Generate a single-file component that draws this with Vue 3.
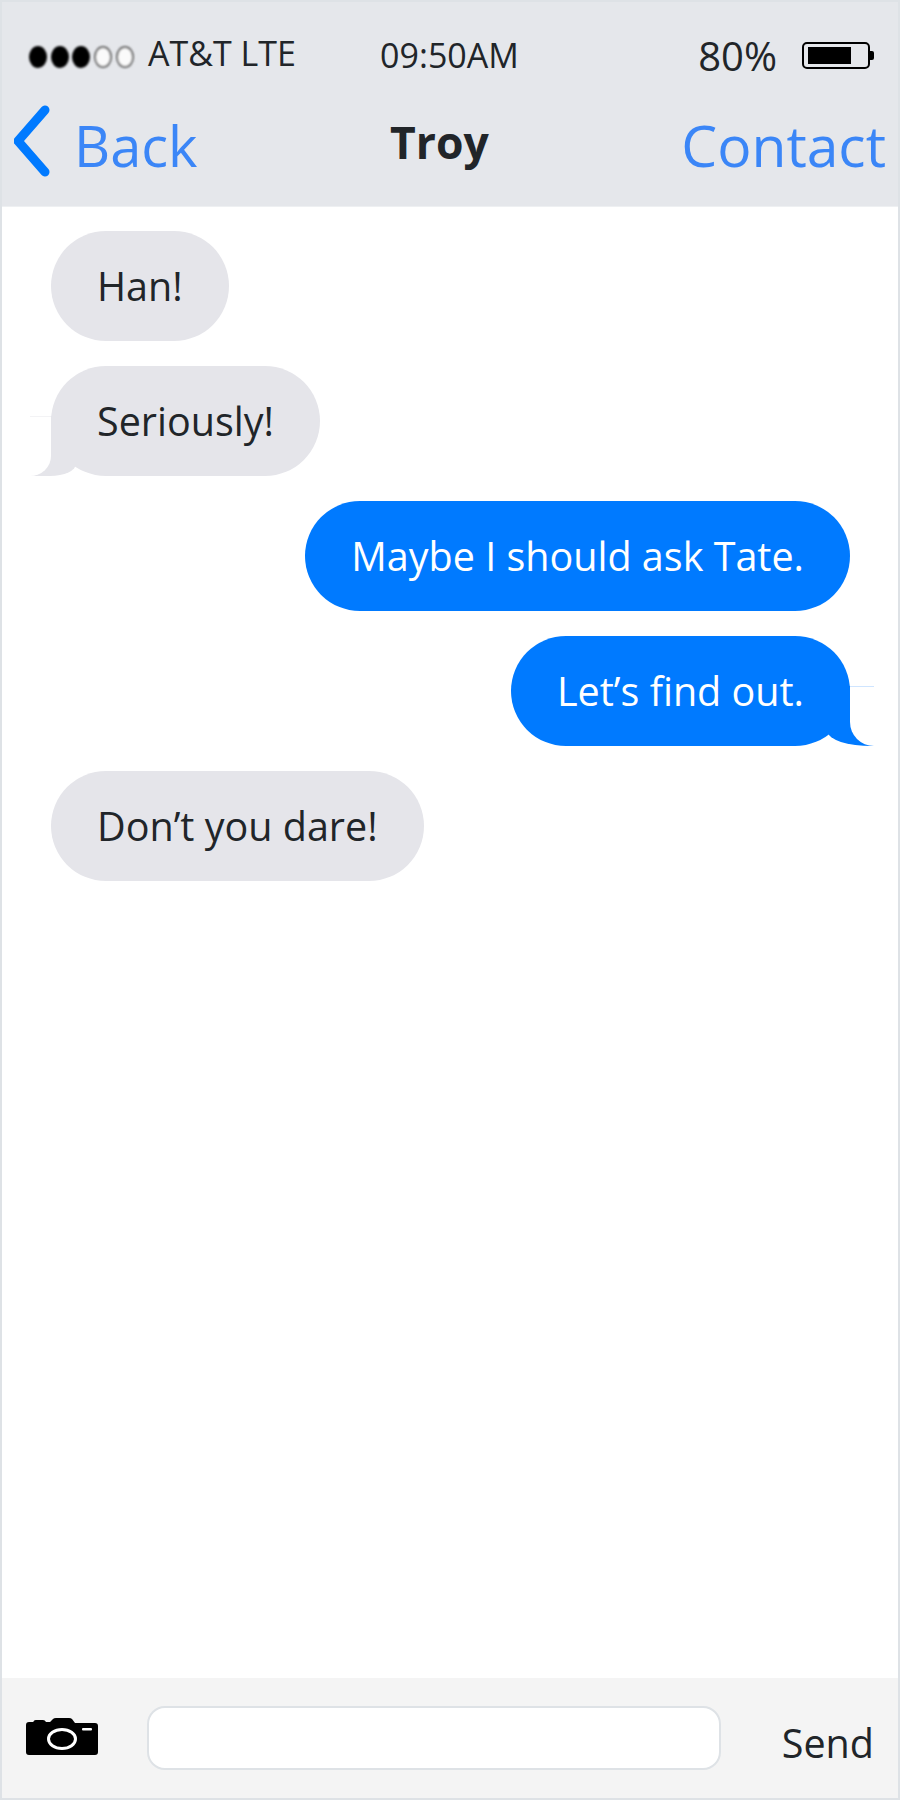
<script setup>
const messages = [
  { id: 1, text: 'Han!', mine: false, tail: false },
  { id: 2, text: 'Seriously!', mine: false, tail: true },
  { id: 3, text: 'Maybe I should ask Tate.', mine: true, tail: false },
  { id: 4, text: 'Let’s find out.', mine: true, tail: true },
  { id: 5, text: 'Don’t you dare!', mine: false, tail: false },
]

const signal = [19, 41, 62, 84, 106]
</script>

<template>
  <div class="phone">
    <header class="topbar">
      <div class="status-row">
        <div class="carrier">
          <svg class="signal" width="118" height="32" viewBox="0 0 118 32">
            <defs>
              <filter id="soft" x="-20%" y="-20%" width="140%" height="140%">
                <feGaussianBlur stdDeviation="1.1" />
              </filter>
            </defs>
            <g filter="url(#soft)">
              <ellipse
                v-for="(x, i) in signal"
                :key="x"
                :cx="x"
                cy="16"
                :rx="i < 3 ? 9 : 8"
                :ry="i < 3 ? 11 : 10"
                :fill="i < 3 ? '#000' : '#fafafa'"
                :stroke="i < 3 ? 'none' : '#666'"
                :stroke-width="i < 3 ? 0 : 2"
              />
            </g>
          </svg>
          <span>AT&amp;T LTE</span>
        </div>
        <div class="time">09:50AM</div>
        <div class="power">
          <span>80%</span>
          <svg class="battery" width="72" height="27" viewBox="0 0 72 27">
            <rect x="1" y="1" width="66" height="25" rx="4" fill="none" stroke="#000" stroke-width="2" />
            <rect x="6" y="5" width="43" height="17" fill="#000" />
            <path d="M68 9h2a2 2 0 0 1 2 2v5a2 2 0 0 1-2 2h-2z" fill="#000" />
          </svg>
        </div>
      </div>
      <nav class="nav-row">
        <a class="nav-link back">
          <svg class="chevron" width="36" height="72" viewBox="0 0 36 72">
            <path d="M31 5 4 36l27 31" fill="none" stroke="#007aff" stroke-width="9" stroke-linecap="round" stroke-linejoin="round" />
          </svg>
          <span>Back</span>
        </a>
        <div class="title">Troy</div>
        <a class="nav-link">Contact</a>
      </nav>
    </header>

    <main class="thread">
      <div
        v-for="msg in messages"
        :key="msg.id"
        class="bubble"
        :class="{ mine: msg.mine, tail: msg.tail }"
      >
        <span class="bubble-text">{{ msg.text }}</span>
      </div>
    </main>

    <footer class="composer">
      <svg class="camera" width="72" height="38" viewBox="0 0 72 38">
        <path
          fill="#000"
          d="M3 4H7L8 3Q8 2 10 2H17Q19 2 20 4H24L27 1Q28 0 30 0H43Q45 0 46 1L49 5H69Q72 5 72 8V34Q72 37 69 37H3Q0 37 0 34V7Q0 4 3 4Z"
        />
        <ellipse cx="36" cy="21" rx="13.5" ry="9.5" fill="none" stroke="#fff" stroke-width="3" />
        <rect x="56" y="10" width="10" height="2.5" rx="1" fill="#fff" />
      </svg>
      <input class="composer-input" type="text" />
      <span class="send">Send</span>
    </footer>
  </div>
</template>

<style>
html,
body {
  margin: 0;
  background: #fff;
}
</style>

<style scoped>
.phone {
  box-sizing: border-box;
  width: 900px;
  height: 1800px;
  display: flex;
  flex-direction: column;
  border: 2px solid #dee2e6;
  background: #fff;
  color: #212529;
  font-family: "Open Sans", "Noto Sans", sans-serif;
}

.topbar {
  height: 205px;
  flex: none;
  box-sizing: border-box;
  padding: 0 10px 0 14px;
  background: #e5e7eb;
  border-bottom: 1px solid #eef0f2;
}

.status-row {
  box-sizing: border-box;
  height: 98px;
  padding-top: 8px;
  display: grid;
  grid-template-columns: 1fr auto 1fr;
  align-items: center;
  font-size: 34px;
}

.carrier {
  display: flex;
  align-items: center;
  gap: 11px;
  margin: -4px 0 0 3px;
}

.signal {
  flex: none;
  margin-top: 7px;
}

.time {
  margin-left: -5px;
}

.power {
  justify-self: end;
  display: flex;
  align-items: center;
  gap: 25px;
  margin-right: 14px;
  font-size: 40px;
}

.nav-row {
  display: flex;
  align-items: center;
  justify-content: space-between;
  height: 90px;
  padding-right: 2px;
}

.nav-link {
  display: flex;
  align-items: center;
  gap: 24px;
  color: #3b86f7;
  font-size: 57px;
}

.back {
  font-size: 56px;
}

.chevron {
  flex: none;
  margin: -8px 0 0 -2px;
  filter: blur(0.7px);
}

.title {
  font-size: 44.5px;
  font-weight: 700;
  margin-top: -8px;
}

.thread {
  flex: 1;
  display: flex;
  flex-direction: column;
  align-items: flex-start;
  gap: 25px;
  padding: 24px 48px 24px 49px;
}

.bubble {
  position: relative;
  z-index: 0;
  box-sizing: border-box;
  height: 110px;
  display: flex;
  align-items: center;
  padding: 0 46px;
  border-radius: 55px;
  background: #e5e5ea;
  font-size: 39.5px;
}

.bubble.mine {
  align-self: flex-end;
  background: #007aff;
  color: #fff;
}

.bubble.tail::before {
  content: "";
  position: absolute;
  z-index: -1;
  left: -21px;
  bottom: 0;
  width: 46px;
  height: 60px;
  background: #e5e5ea;
  border-bottom-right-radius: 26px 12px;
}

.bubble.tail::after {
  content: "";
  position: absolute;
  z-index: -1;
  left: -21px;
  bottom: 0;
  box-sizing: border-box;
  width: 21px;
  height: 60px;
  background: #fff;
  border-top: 1px solid #f3f3f5;
  border-bottom-right-radius: 21px 20px;
}

.bubble.mine.tail::before {
  left: auto;
  right: -24px;
  background: #007aff;
  border-bottom-right-radius: 0;
  border-bottom-left-radius: 44px 14px;
}

.bubble.mine.tail::after {
  left: auto;
  right: -24px;
  width: 24px;
  border-top-color: #cfe5ff;
  border-bottom-right-radius: 0;
  border-bottom-left-radius: 24px 24px;
}

.composer {
  height: 120px;
  flex: none;
  display: flex;
  align-items: center;
  box-sizing: border-box;
  padding: 0 24px;
  background: #f4f4f4;
}

.camera {
  flex: none;
  margin-top: -3px;
}

.composer-input {
  box-sizing: border-box;
  width: 574px;
  height: 64px;
  margin-left: 49px;
  border: 2px solid #dee2e6;
  border-radius: 18px;
  background: #fff;
  outline: none;
}

.send {
  margin-left: auto;
  font-size: 39.5px;
  margin-top: 10px;
}
</style>
